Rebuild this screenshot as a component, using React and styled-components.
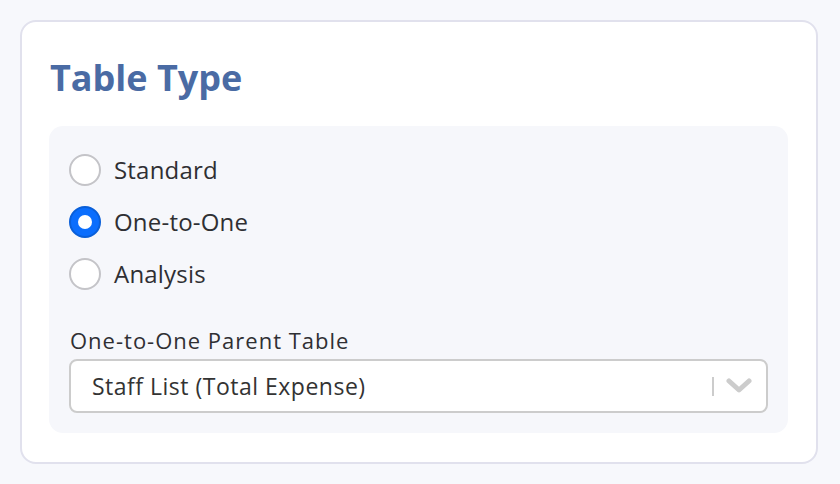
import styled, { createGlobalStyle } from 'styled-components';
import { useState } from 'react';

const GlobalStyle = createGlobalStyle`
  html, body {
    margin: 0;
    padding: 0;
    background: #f7f8fc;
    font-family: 'Open Sans', 'Lato', sans-serif;
  }
`;

const Page = styled.div`
  padding: 20px 22px 20px 20px;
  box-sizing: border-box;
  width: 840px;
  height: 484px;
`;

const Card = styled.section`
  background: #ffffff;
  border: 2px solid #e1e1ed;
  border-radius: 16px;
  padding: 28px 28px 28px 27px;
  box-sizing: border-box;
  height: 444px;
`;

const Title = styled.h2`
  margin: 0 0 20px 1px;
  font-size: 36px;
  line-height: 56px;
  font-weight: 700;
  color: #4a6ba4;
`;

const Panel = styled.div`
  background: #f6f7fb;
  border-radius: 14px;
  padding: 28px 20px 20px 20px;
`;

const RadioList = styled.div`
  display: flex;
  flex-direction: column;
  gap: 20px;
  margin-bottom: 37px;
`;

const RadioRow = styled.label`
  display: flex;
  align-items: center;
  gap: 13px;
  cursor: pointer;
  font-size: 24px;
  color: #2f2f33;
  line-height: 32px;
  letter-spacing: 0.2px;
`;

const RadioCircle = styled.span`
  width: 32px;
  height: 32px;
  border-radius: 50%;
  box-sizing: border-box;
  flex-shrink: 0;
  display: flex;
  align-items: center;
  justify-content: center;
  background: ${(p) => (p.$checked ? '#0b6efd' : '#ffffff')};
  border: 2px solid ${(p) => (p.$checked ? '#0a5fd8' : '#c4c4c8')};

  &::after {
    content: '';
    display: ${(p) => (p.$checked ? 'block' : 'none')};
    width: 14px;
    height: 14px;
    border-radius: 50%;
    background: #ffffff;
  }
`;

const FieldLabel = styled.div`
  font-size: 22px;
  color: #2f2f33;
  line-height: 26px;
  margin: 0 0 6px 1px;
  letter-spacing: 1px;
`;

const Select = styled.div`
  display: flex;
  align-items: center;
  height: 54px;
  box-sizing: border-box;
  background: #ffffff;
  border: 2px solid #cccccc;
  border-radius: 8px;
  padding: 0 14px 0 21px;
`;

const SelectValue = styled.span`
  flex: 1;
  font-size: 23px;
  color: #333333;
  letter-spacing: 0.5px;
`;

const Separator = styled.span`
  width: 2px;
  height: 19px;
  background: #cccccc;
  margin-right: 12px;
`;

const Chevron = () => (
  <svg width="26" height="18" viewBox="0 0 26 18" fill="none">
    <polyline
      points="3,4 13,13 23,4"
      stroke="#cccccc"
      strokeWidth="5"
      strokeLinecap="round"
      strokeLinejoin="round"
    />
  </svg>
);

const options = ['Standard', 'One-to-One', 'Analysis'];

export default function App() {
  const [type, setType] = useState('One-to-One');

  return (
    <>
      <GlobalStyle />
      <Page>
        <Card>
          <Title>Table Type</Title>
          <Panel>
            <RadioList>
              {options.map((opt) => (
                <RadioRow key={opt} onClick={() => setType(opt)}>
                  <RadioCircle $checked={type === opt} />
                  {opt}
                </RadioRow>
              ))}
            </RadioList>
            <FieldLabel>One-to-One Parent Table</FieldLabel>
            <Select>
              <SelectValue>Staff List (Total Expense)</SelectValue>
              <Separator />
              <Chevron />
            </Select>
          </Panel>
        </Card>
      </Page>
    </>
  );
}
